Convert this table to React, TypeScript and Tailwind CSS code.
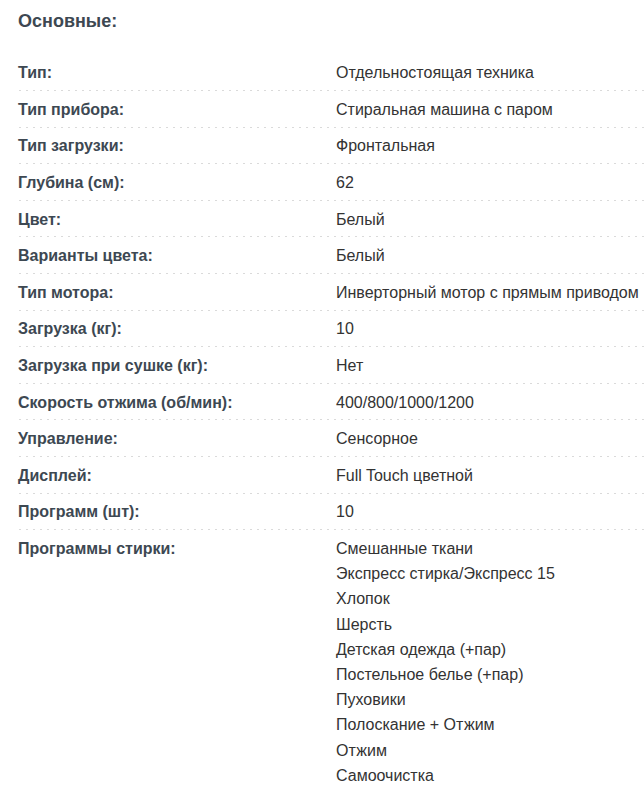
const specs: [string, string[]][] = [
  ["Тип:", ["Отдельностоящая техника"]],
  ["Тип прибора:", ["Стиральная машина с паром"]],
  ["Тип загрузки:", ["Фронтальная"]],
  ["Глубина (см):", ["62"]],
  ["Цвет:", ["Белый"]],
  ["Варианты цвета:", ["Белый"]],
  ["Тип мотора:", ["Инверторный мотор с прямым приводом"]],
  ["Загрузка (кг):", ["10"]],
  ["Загрузка при сушке (кг):", ["Нет"]],
  ["Скорость отжима (об/мин):", ["400/800/1000/1200"]],
  ["Управление:", ["Сенсорное"]],
  ["Дисплей:", ["Full Touch цветной"]],
  ["Программ (шт):", ["10"]],
  [
    "Программы стирки:",
    [
      "Смешанные ткани",
      "Экспресс стирка/Экспресс 15",
      "Хлопок",
      "Шерсть",
      "Детская одежда (+пар)",
      "Постельное белье (+пар)",
      "Пуховики",
      "Полоскание + Отжим",
      "Отжим",
      "Самоочистка",
    ],
  ],
];

export default function App() {
  return (
    <div className="min-h-[792px] bg-white pl-[18px] font-['Liberation_Sans',Arial,sans-serif] text-[16px]">
      <h2 className="pt-[9px] text-[18px] font-bold leading-[24px] text-[#3d4852]">
        Основные:
      </h2>
      <div className="mt-[21.5px]">
        {specs.map(([label, values], i) => (
          <div
            key={label}
            className={
              "grid grid-cols-[318px_1fr] py-[5.7px] leading-[25.22px] " +
              (i < specs.length - 1
                ? "bg-[linear-gradient(to_right,#b5b5b5_1px,transparent_1px)] bg-[length:7px_1px] bg-bottom bg-repeat-x"
                : "")
            }
          >
            <div className="font-bold text-[#3d4852]">{label}</div>
            <div className="text-[#333]">
              {values.map((v) => (
                <div key={v}>{v}</div>
              ))}
            </div>
          </div>
        ))}
      </div>
    </div>
  );
}
